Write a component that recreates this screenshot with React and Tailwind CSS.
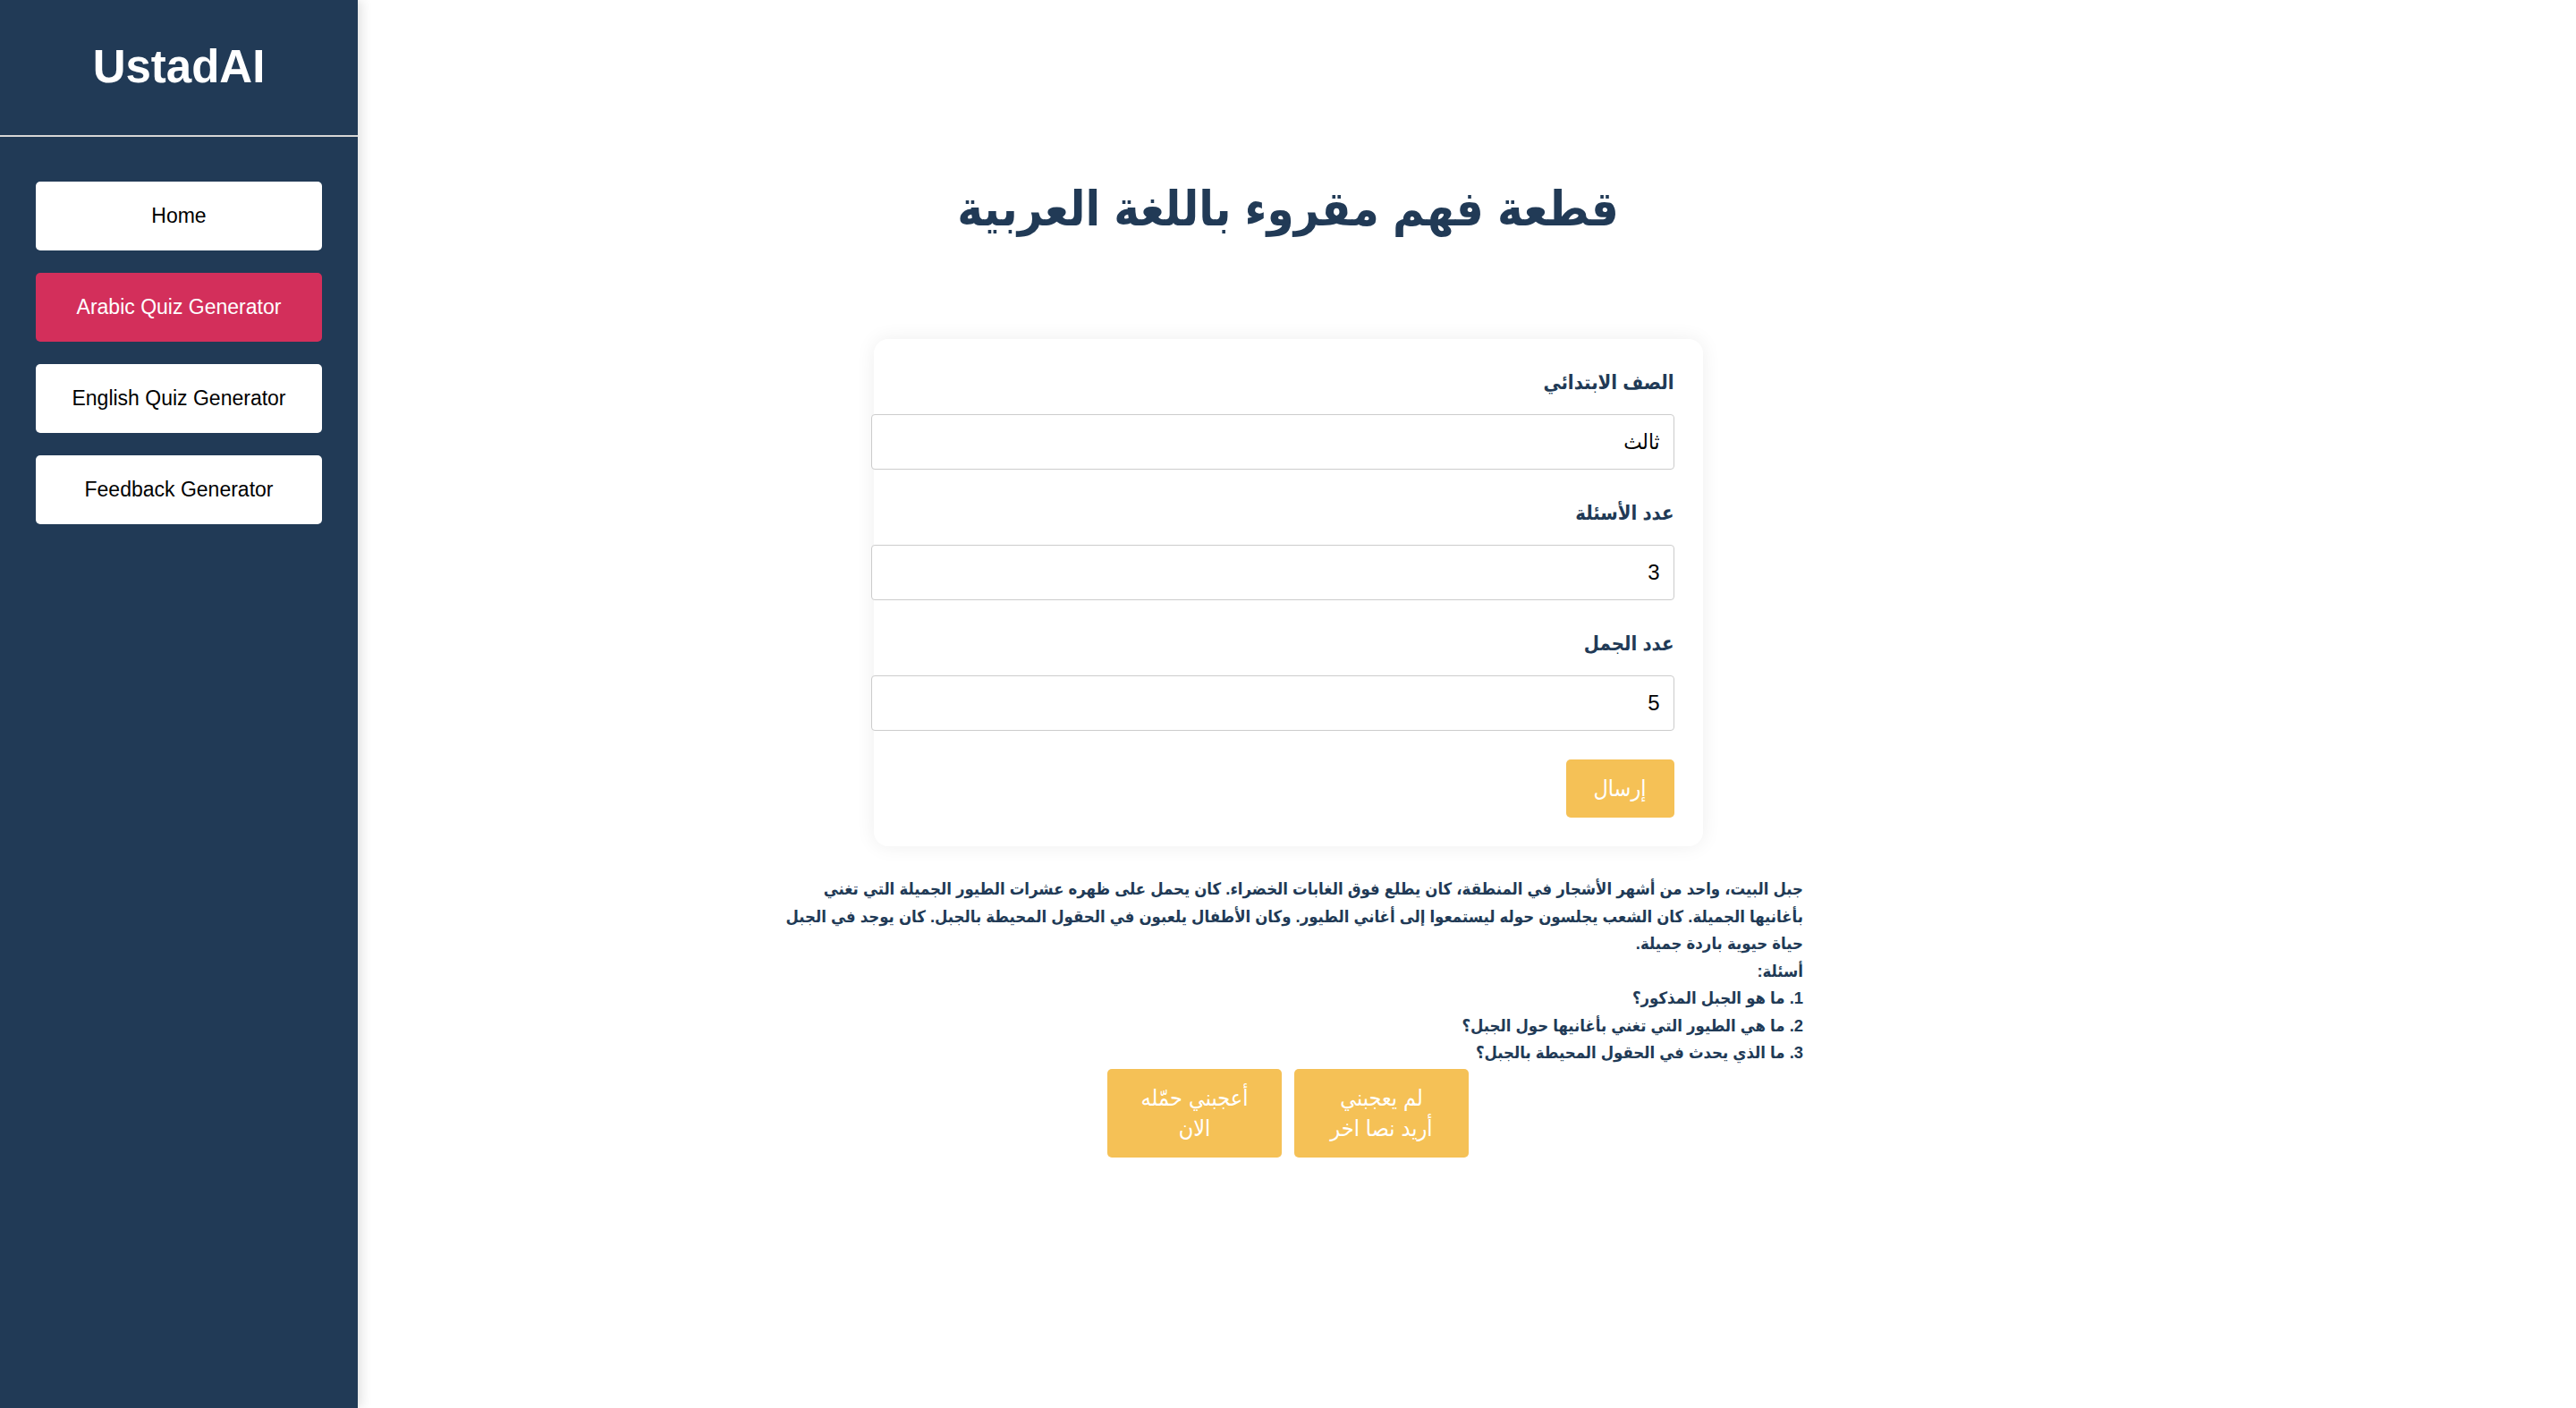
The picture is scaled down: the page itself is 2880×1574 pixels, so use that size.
import React, { useState } from "react";

const navItems = [
  "Home",
  "Arabic Quiz Generator",
  "English Quiz Generator",
  "Feedback Generator",
];

const passage = `جبل البيت، واحد من أشهر الأشجار في المنطقة، كان يطلع فوق الغابات الخضراء. كان يحمل على ظهره عشرات الطيور الجميلة التي تغني
بأغانيها الجميلة. كان الشعب يجلسون حوله ليستمعوا إلى أغاني الطيور. وكان الأطفال يلعبون في الحقول المحيطة بالجبل. كان يوجد في الجبل
حياة حيوية باردة جميلة.
أسئلة:
1. ما هو الجبل المذكور؟
2. ما هي الطيور التي تغني بأغانيها حول الجبل؟
3. ما الذي يحدث في الحقول المحيطة بالجبل؟`;

function Field({ label, value, onChange }) {
  return (
    <div>
      <label className="block text-[22px] leading-[33px] font-bold text-[#213a56] mb-[19px]">
        {label}
      </label>
      <input
        value={value}
        onChange={(e) => onChange(e.target.value)}
        className="block w-[898px] h-[62px] px-[15px] mb-[32px] border border-[#cccccc] rounded-[4px] bg-white text-[24px] text-black outline-none"
      />
    </div>
  );
}

export default function App() {
  const [active, setActive] = useState("Arabic Quiz Generator");
  const [grade, setGrade] = useState("ثالث");
  const [questions, setQuestions] = useState("3");
  const [sentences, setSentences] = useState("5");

  return (
    <div className="flex min-h-screen bg-white font-['Liberation_Sans',sans-serif]">
      <aside className="w-[400px] shrink-0 min-h-screen bg-[#213a56] shadow-[4px_0_12px_rgba(0,0,0,0.12)] z-10">
        <div className="h-[153px] flex items-center justify-center border-b-2 border-[#d6d6d6]">
          <h2 className="text-[51px] font-bold text-white">UstadAI</h2>
        </div>
        <nav className="flex flex-col gap-[25px] px-[40px] pt-[50px]">
          {navItems.map((item) => (
            <button
              key={item}
              onClick={() => setActive(item)}
              className={`h-[77px] rounded-[5px] text-[23px] ${
                active === item
                  ? "bg-[#d32f5b] text-white"
                  : "bg-white text-black"
              }`}>
              {item}
            </button>
          ))}
        </nav>
      </aside>

      <main
        dir="rtl"
        className="flex-1 pr-[400px] flex flex-col items-center font-['Liberation_Sans','DejaVu_Sans_Condensed',sans-serif]">
        <h1 className="pt-[193px] text-[54px] leading-[80px] font-bold text-[#213a56]">
          قطعة فهم مقروء باللغة العربية
        </h1>

        <form
          onSubmit={(e) => e.preventDefault()}
          className="mt-[106px] w-[927px] p-[32px] bg-white rounded-[16px] shadow-[0_0_22px_rgba(0,0,0,0.07)]">
          <Field label="الصف الابتدائي" value={grade} onChange={setGrade} />
          <Field label="عدد الأسئلة" value={questions} onChange={setQuestions} />
          <Field label="عدد الجمل" value={sentences} onChange={setSentences} />
          <button
            type="submit"
            className="block w-[121px] h-[65px] rounded-[5px] bg-[#f5c156] text-white text-[25px]">
            إرسال
          </button>
        </form>

        <p className="mt-[33px] w-[1152px] whitespace-pre-line text-[18.4px] leading-[30.5px] font-bold text-[#213a56]">
          {passage}
        </p>

        <div className="mt-[2px] flex gap-[14px]">
          <button className="w-[195px] h-[99px] rounded-[5px] bg-[#f5c156] text-white text-[25px] leading-[34px]">
            لم يعجبني
            <br />
            أريد نصا اخر
          </button>
          <button className="w-[195px] h-[99px] rounded-[5px] bg-[#f5c156] text-white text-[25px] leading-[34px]">
            أعجبني حمّله
            <br />
            الان
          </button>
        </div>
      </main>
    </div>
  );
}
